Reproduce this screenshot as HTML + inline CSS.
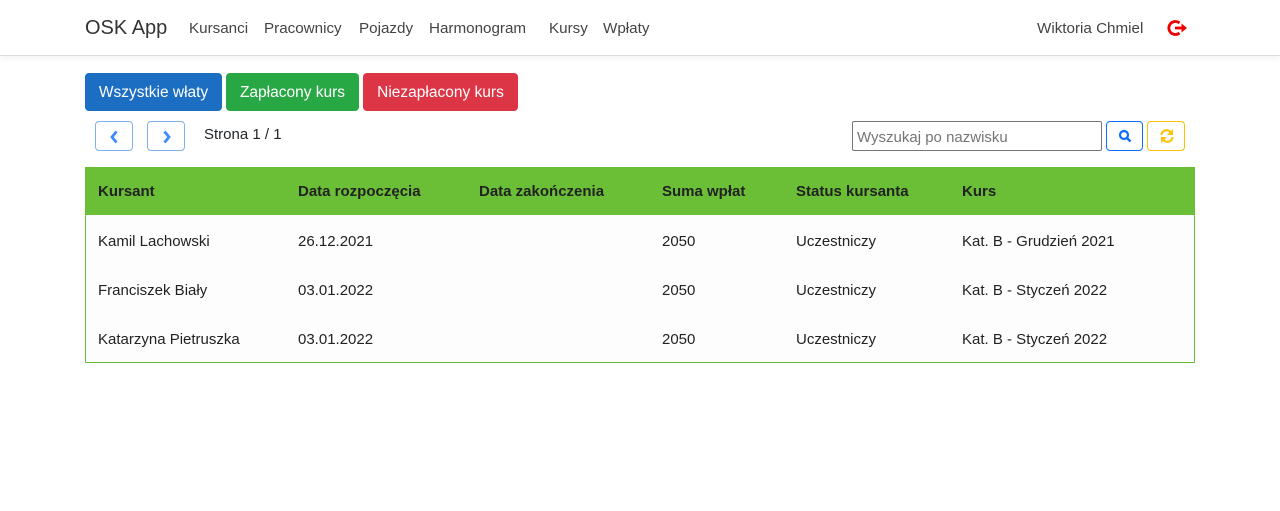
<!DOCTYPE html>
<html><head><meta charset="utf-8"><style>
*{box-sizing:border-box;margin:0;padding:0}
body{width:1280px;height:511px;background:#fff;font-family:"Liberation Sans",sans-serif;color:#212529;position:relative;overflow:hidden;font-size:15px}
.nav{position:absolute;left:0;top:0;width:1280px;height:56px;border-bottom:1px solid #dcdcdc;box-shadow:0 2px 6px rgba(0,0,0,.06)}
.a{position:absolute;top:20px;font-size:15.2px;color:#444}
.btn{position:absolute;top:73px;height:38px;border-radius:4px;color:#fff;font-size:15.5px;line-height:40px;text-align:center}
.sb{position:absolute;width:38px;height:30px;border:1px solid;border-radius:4px;background:#fff}
.t{position:absolute;font-size:15px}
.hd{position:absolute;left:85px;top:167px;width:1110px;height:48px;background:#6abf37}
.hd span{position:absolute;top:16px;font-weight:bold;font-size:15px;color:#222}
.rows{position:absolute;left:85px;top:215px;width:1110px;height:148px;border:1px solid #6abf37;border-top:none;background:#fdfdfd}
.r{position:absolute;font-size:15px;color:#222}
</style></head><body>
<div class="nav">
<div class="a" style="left:85px;top:17px;font-size:20px;color:#333">OSK App</div>
<div class="a" style="left:189px">Kursanci</div>
<div class="a" style="left:264px">Pracownicy</div>
<div class="a" style="left:359px">Pojazdy</div>
<div class="a" style="left:429px">Harmonogram</div>
<div class="a" style="left:549px">Kursy</div>
<div class="a" style="left:603px">Wpłaty</div>
<div class="a" style="left:1037px">Wiktoria Chmiel</div>
<svg style="position:absolute;left:1167px;top:19px" width="22" height="18" viewBox="0 0 22 18"><path d="M12.5 4A6.5 6.5 0 1 0 12.5 14" fill="none" stroke="#e00" stroke-width="2.8"/><path d="M8 9h8" stroke="#e00" stroke-width="2.8"/><path d="M14.5 4.5l5.5 4.5-5.5 4.5z" fill="#e00"/></svg>
</div>
<div class="btn" style="left:85px;width:137px;background:#1b6ec2">Wszystkie właty</div>
<div class="btn" style="left:226px;width:133px;background:#28a745">Zapłacony kurs</div>
<div class="btn" style="left:363px;width:155px;background:#dc3545">Niezapłacony kurs</div>
<div class="sb" style="left:95px;top:121px;border-color:#7fb0ee"><svg style="position:absolute;left:12px;top:7px" width="12" height="16"><path d="M8.5 2.5L4 8l4.5 5.5" fill="none" stroke="#3d8bfd" stroke-width="2.8"/></svg></div>
<div class="sb" style="left:147px;top:121px;border-color:#7fb0ee"><svg style="position:absolute;left:13px;top:7px" width="12" height="16"><path d="M3.5 2.5L8 8l-4.5 5.5" fill="none" stroke="#3d8bfd" stroke-width="2.8"/></svg></div>
<div class="t" style="left:204px;top:126px">Strona 1 / 1</div>
<div style="position:absolute;left:852px;top:121px;width:250px;height:30px;border:1px solid #767676;border-radius:2px;font-size:15px;color:#757575;padding:7px 4px">Wyszukaj po nazwisku</div>
<div class="sb" style="left:1106px;top:121px;width:37px;border-color:#0d6efd"><svg style="position:absolute;left:11px;top:7px" width="14" height="14"><circle cx="6" cy="6" r="4" fill="none" stroke="#0d6efd" stroke-width="2.2"/><path d="M9 9l3.5 3.5" stroke="#0d6efd" stroke-width="2.4"/></svg></div>
<div class="sb" style="left:1147px;top:121px;border-color:#ffc107"><svg style="position:absolute;left:11px;top:6px" width="16" height="16"><path d="M2.5 7A5 5 0 0 1 12 5M13.5 9A5 5 0 0 1 4 11" fill="none" stroke="#ffc107" stroke-width="2.2"/><path d="M14 1v6H8zM2 15V9h6z" fill="#ffc107"/></svg></div>
<div class="hd">
<span style="left:13px">Kursant</span><span style="left:213px">Data rozpoczęcia</span><span style="left:394px">Data zakończenia</span><span style="left:577px">Suma wpłat</span><span style="left:711px">Status kursanta</span><span style="left:877px">Kurs</span>
</div>
<div class="rows">
<div class="r" style="left:12px;top:18px">Kamil Lachowski</div><div class="r" style="left:212px;top:18px">26.12.2021</div><div class="r" style="left:576px;top:18px">2050</div><div class="r" style="left:710px;top:18px">Uczestniczy</div><div class="r" style="left:876px;top:18px">Kat. B - Grudzień 2021</div>
<div class="r" style="left:12px;top:67px">Franciszek Biały</div><div class="r" style="left:212px;top:67px">03.01.2022</div><div class="r" style="left:576px;top:67px">2050</div><div class="r" style="left:710px;top:67px">Uczestniczy</div><div class="r" style="left:876px;top:67px">Kat. B - Styczeń 2022</div>
<div class="r" style="left:12px;top:116px">Katarzyna Pietruszka</div><div class="r" style="left:212px;top:116px">03.01.2022</div><div class="r" style="left:576px;top:116px">2050</div><div class="r" style="left:710px;top:116px">Uczestniczy</div><div class="r" style="left:876px;top:116px">Kat. B - Styczeń 2022</div>
</div>
</body></html>
